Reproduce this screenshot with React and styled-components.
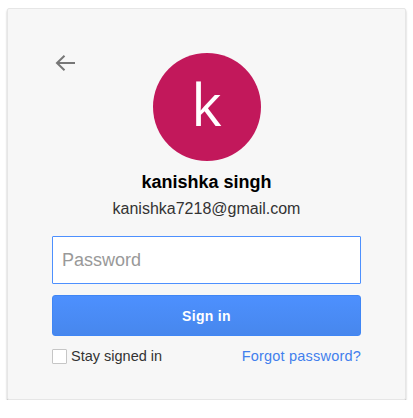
import React from "react";
import styled, { createGlobalStyle } from "styled-components";

const Global = createGlobalStyle`
  html, body { margin: 0; padding: 0; background: #ffffff; }
  body { font-family: "Liberation Sans", Arial, sans-serif; }
`;

const Page = styled.div`
  padding: 8px 0 0 7px;
`;

const Card = styled.div`
  box-sizing: border-box;
  width: 399px;
  height: 392px;
  background: #f7f7f7;
  border: 1px solid #e6e6e6;
  border-radius: 2px;
  box-shadow: 0 2px 2px rgba(0, 0, 0, 0.3);
  padding: 44px 44px 0 44px;
  display: flex;
  flex-direction: column;
`;

const Header = styled.div`
  display: grid;
  grid-template-columns: 1fr auto 1fr;
  align-items: start;
`;

const BackButton = styled.button`
  justify-self: start;
  margin: 2px 0 0 2px;
  padding: 0;
  border: 0;
  background: none;
  width: 22px;
  height: 20px;
  display: flex;
  cursor: pointer;
`;

const Avatar = styled.div`
  width: 108px;
  height: 108px;
  border-radius: 50%;
  background: #c2185b;
  color: #ffffff;
  display: flex;
  align-items: center;
  justify-content: center;
  font-family: "Open Sans", "Noto Sans", sans-serif;
  font-size: 58px;
  line-height: 1;
  padding-bottom: 6px;
  box-sizing: border-box;
`;

const Name = styled.div`
  margin-top: 11px;
  text-align: center;
  font-size: 18px;
  font-weight: bold;
  color: #000000;
  line-height: 21px;
`;

const Email = styled.div`
  margin-top: 7px;
  text-align: center;
  font-size: 16px;
  color: #333333;
  line-height: 18px;
`;

const PasswordInput = styled.input`
  margin-top: 18px;
  box-sizing: border-box;
  width: 309px;
  height: 48px;
  border: 1px solid #4d90fe;
  border-radius: 1px;
  background: #ffffff;
  padding: 0 9px;
  font-family: "Liberation Sans", Arial, sans-serif;
  font-size: 18px;
  color: #333;
  outline: none;
  &::placeholder { color: #999999; }
`;

const SignInButton = styled.button`
  margin-top: 11px;
  box-sizing: border-box;
  width: 309px;
  height: 41px;
  border: 1px solid #3f86f5;
  border-radius: 3px;
  background: linear-gradient(#4d90fe, #4787ed);
  color: #ffffff;
  font-family: "Liberation Sans", Arial, sans-serif;
  font-size: 14px;
  font-weight: bold;
  letter-spacing: 0.3px;
  cursor: pointer;
`;

const OptionsRow = styled.div`
  margin-top: 12px;
  display: flex;
  align-items: center;
  justify-content: space-between;
  font-size: 14.5px;
  line-height: 17px;
`;

const CheckLabel = styled.label`
  display: flex;
  align-items: center;
  gap: 4px;
  color: #333333;
`;

const Box = styled.span`
  box-sizing: border-box;
  width: 15px;
  height: 15px;
  border: 1px solid #c6c6c6;
  border-radius: 1px;
  background: #ffffff;
`;

const Link = styled.a`
  color: #427fed;
  text-decoration: none;
  letter-spacing: 0.2px;
`;

export default function App() {
  return (
    <>
      <Global />
      <Page>
        <Card>
          <Header>
            <BackButton aria-label="Back">
              <svg width="22" height="20" viewBox="0 0 22 20">
                <path
                  d="M3 8 H21 M10.5 0.8 L3 8 L10.5 15.2"
                  fill="none"
                  stroke="#777"
                  strokeWidth="2"
                />
              </svg>
            </BackButton>
            <Avatar>k</Avatar>
            <div />
          </Header>
          <Name>kanishka singh</Name>
          <Email>kanishka7218@gmail.com</Email>
          <PasswordInput type="password" placeholder="Password" />
          <SignInButton>Sign in</SignInButton>
          <OptionsRow>
            <CheckLabel>
              <Box />
              Stay signed in
            </CheckLabel>
            <Link href="#">Forgot password?</Link>
          </OptionsRow>
        </Card>
      </Page>
    </>
  );
}
